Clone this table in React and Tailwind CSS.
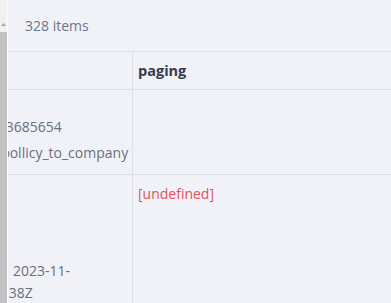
// Record table pane: item count, a narrow clipped key column and a "paging" column.
const font = { fontFamily: '"Open Sans", "Noto Sans", sans-serif' }

export default function App() {
  return (
    <div style={font} className="flex h-[303px] w-[391px] overflow-hidden bg-[#f1f2f8] text-[14px]">
      <Scrollbar />
      <main className="flex min-w-0 flex-1 flex-col border-l border-[#fafbfd]">
        <div className="flex h-[51px] shrink-0 items-center pl-[17px] text-[#6f7585]">328 items</div>

        <div className="grid grid-cols-[125px_1fr] border-t border-[#dcdfe9]">
          <div className="h-[38px] border-b border-r border-[#dcdfe9]" />
          <div className="flex h-[38px] items-center border-b border-[#dcdfe9] pl-[5px] text-[14.5px] font-bold text-[#363b47]">
            paging
          </div>

          <div className="h-[85px] overflow-hidden border-b border-r border-[#dcdfe9] pt-[24px] text-[#6c6f79]">
            <div className="-ml-[30px] whitespace-nowrap leading-[26px]">:1723685654</div>
            <div className="-ml-[13px] whitespace-nowrap leading-[26px]">_pollicy_to_company</div>
          </div>
          <div className="h-[85px] border-b border-[#dcdfe9]" />

          <div className="h-[140px] overflow-hidden border-r border-[#dcdfe9] pt-[85px] text-[#6c6f79]">
            <div className="whitespace-nowrap pl-[5px] leading-[22px]">2023-11-</div>
            <div className="-ml-[3px] whitespace-nowrap leading-[22px]">:38Z</div>
          </div>
          <div className="h-[140px] pl-[5px] pt-[8px] leading-[22px] text-[#e0525a]">[undefined]</div>
        </div>
      </main>
    </div>
  )
}

function Scrollbar() {
  return (
    <div className="flex w-[7px] shrink-0 flex-col bg-[#f1f1f1]">
      <div className="flex h-[32px] items-end justify-center pb-[6px]">
        <svg width="7" height="4" viewBox="0 0 7 4">
          <path d="M1 4 L3.5 1 L6 4 Z" fill="#a3a3a3" />
        </svg>
      </div>
      <div className="flex-1 bg-[#c1c1c1]" />
    </div>
  )
}
